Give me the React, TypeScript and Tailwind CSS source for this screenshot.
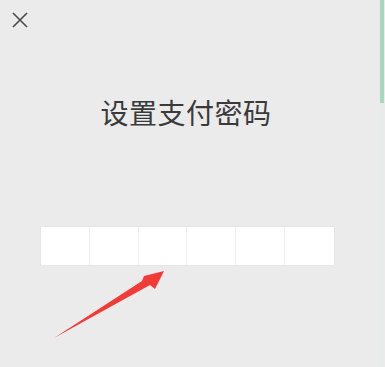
import React from 'react';

const App: React.FC = () => {
  return (
    <div
      className="relative w-[385px] h-[367px] overflow-hidden bg-[#ebebeb] flex"
      style={{ fontFamily: '"Noto Sans CJK SC", "Noto Sans", sans-serif' }}
    >
      <div className="flex-1 flex flex-col">
        {/* Close */}
        <div className="pl-[12px] pt-[12px] h-[28px]">
          <svg width="16" height="16" viewBox="0 0 16 16" className="text-[#4a4a4a]">
            <path d="M1 1 L15 15 M15 1 L1 15" stroke="currentColor" strokeWidth="1.6" fill="none" />
          </svg>
        </div>

        {/* Title */}
        <div className="mt-[68px] flex justify-center pr-[8px]">
          <h1 className="text-[28px] leading-[32px] font-normal text-[#3a3a3a] tracking-[0.5px]">设置支付密码</h1>
        </div>

        {/* Password cells */}
        <div className="mt-[98px] ml-[40px] w-[295px] h-[40px] bg-white border border-[#e6e6e6] grid grid-cols-6">
          {[0, 1, 2, 3, 4, 5].map((i) => (
            <div key={i} className={i < 5 ? 'border-r border-[#f0f0f0]' : ''} />
          ))}
        </div>
      </div>

      {/* scrollbar */}
      <div className="w-[4px] mr-[1px] flex flex-col">
        <div className="h-[103px] bg-[#a9d9bd]" />
        <div className="flex-1 bg-[#e8ebea]" />
      </div>

      {/* annotation arrow */}
      <svg className="absolute left-0 top-0" width="385" height="367" viewBox="0 0 385 367">
        <polygon points="54,338 142,281 144,276 164,271 155,289 150,285" fill="#f23a36" />
      </svg>
    </div>
  );
};

export default App;
